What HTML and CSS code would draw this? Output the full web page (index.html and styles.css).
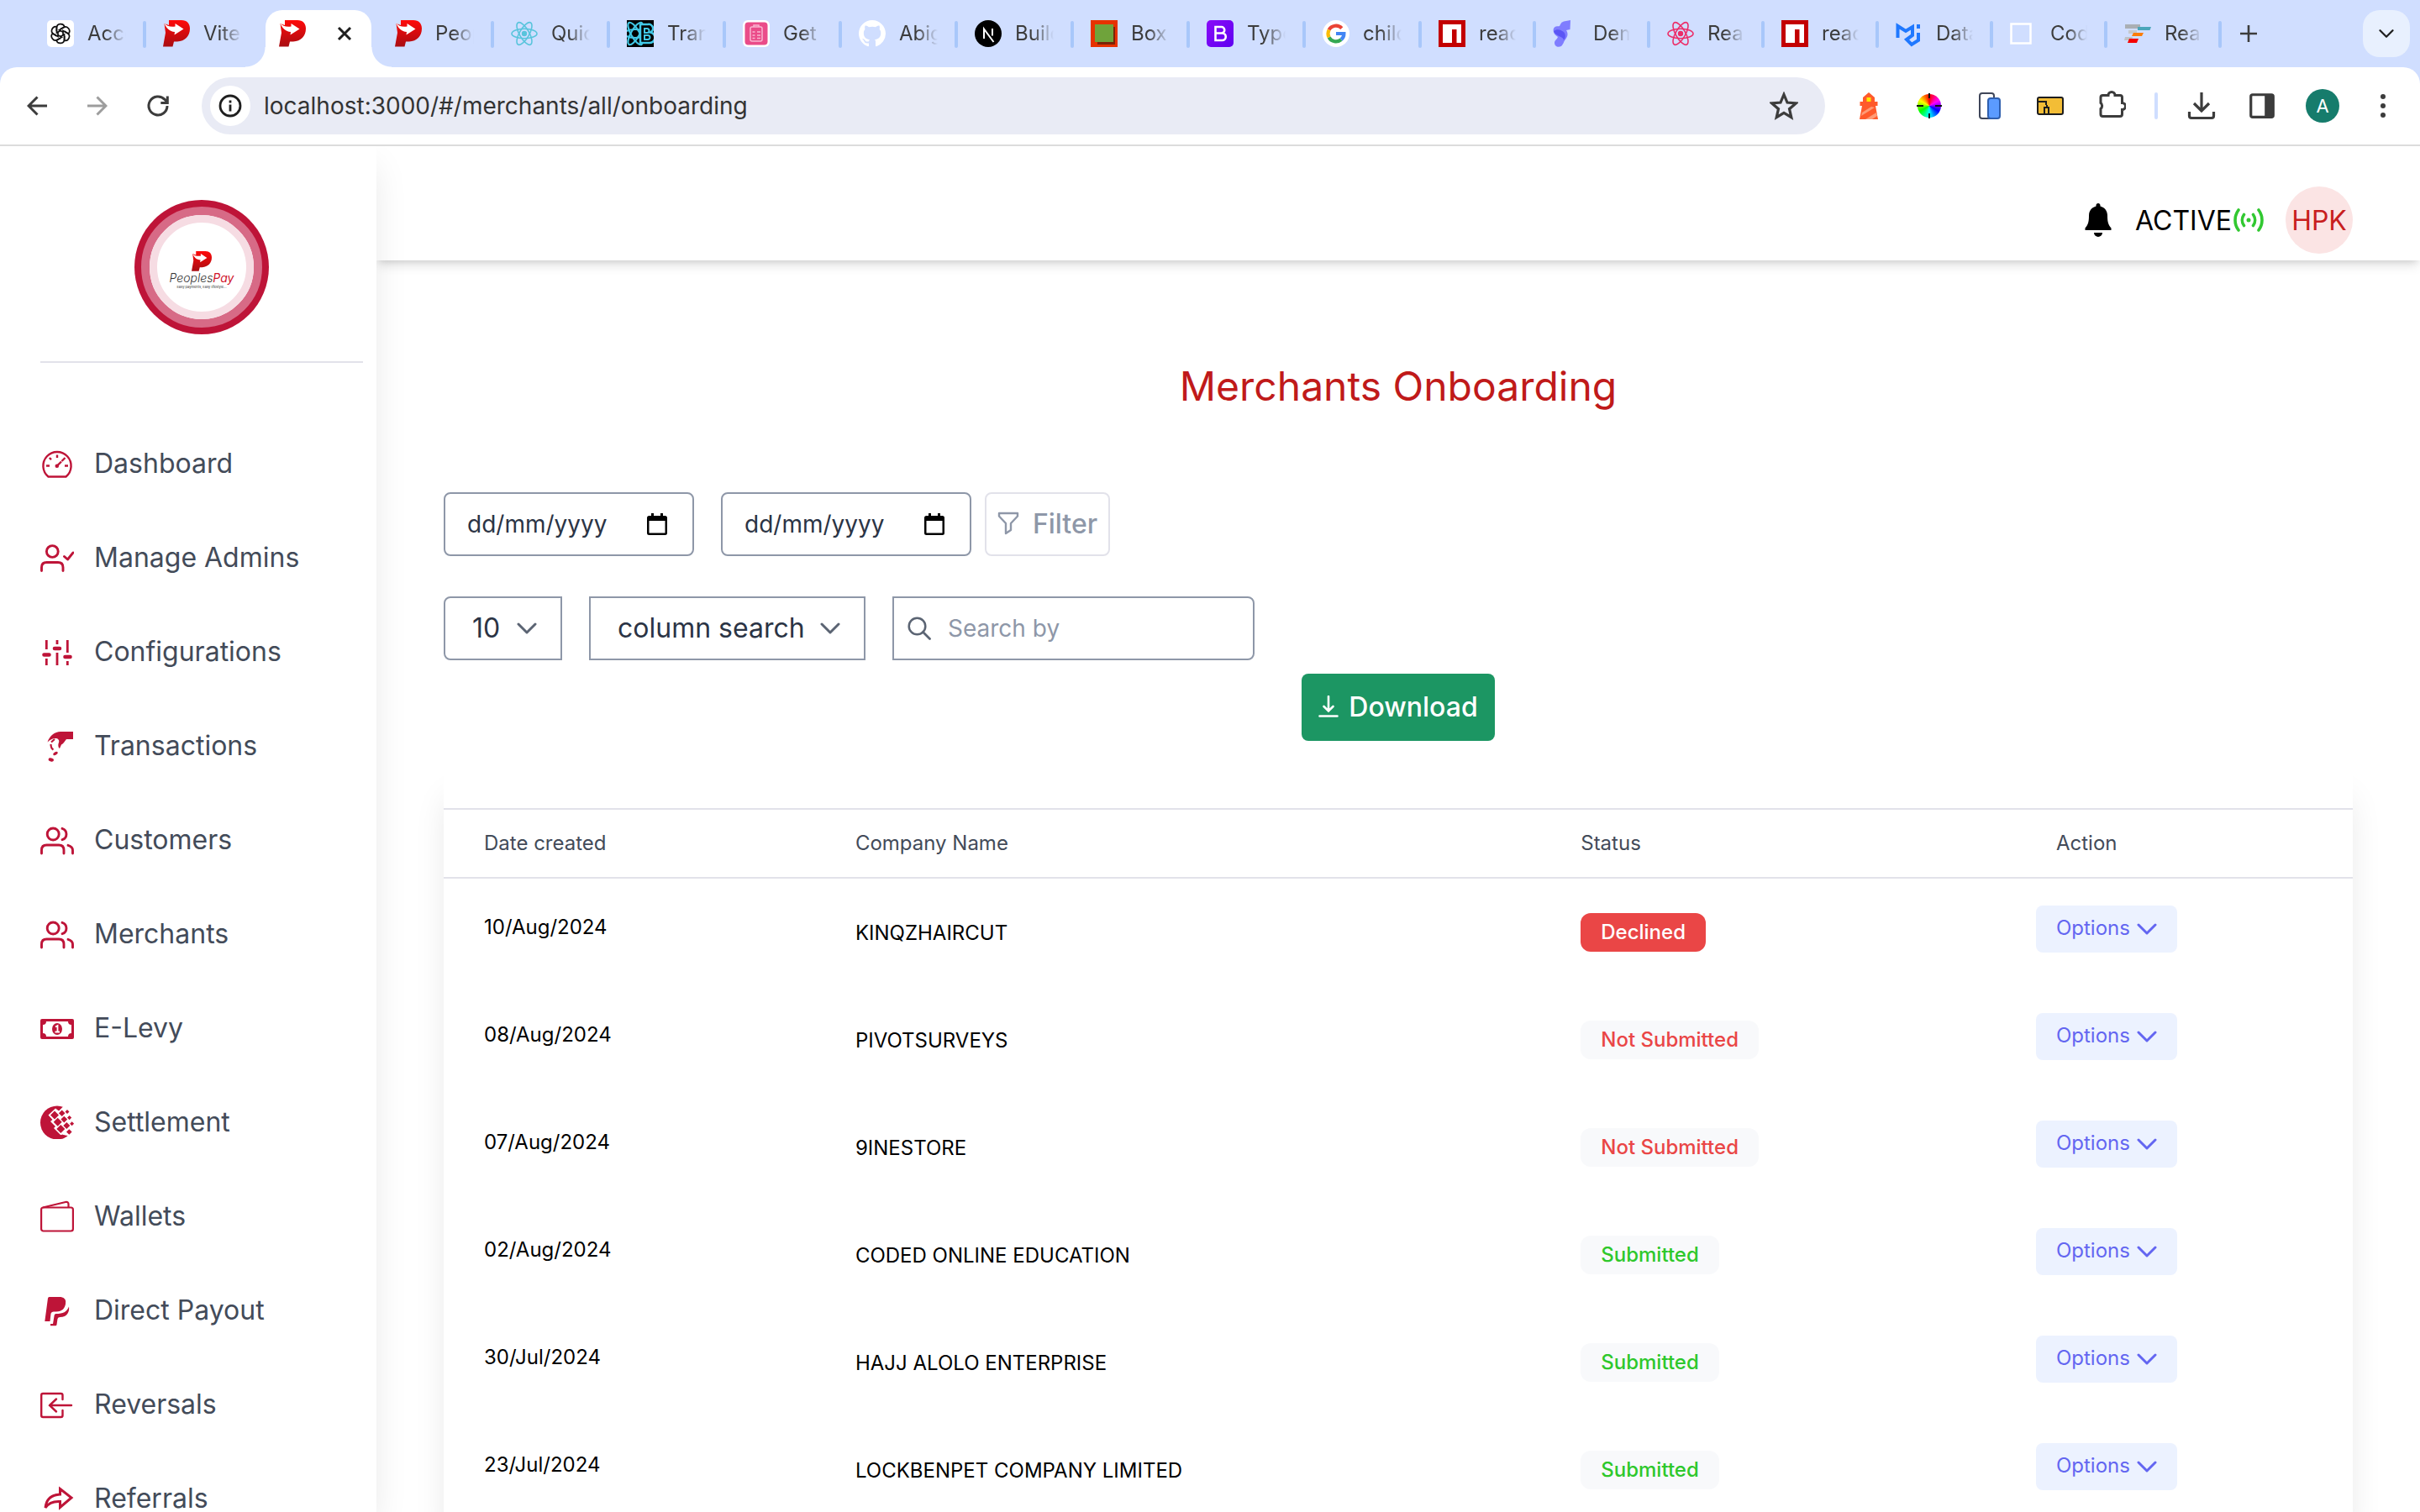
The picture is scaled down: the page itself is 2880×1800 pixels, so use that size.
FILE: index.html
```html
<!DOCTYPE html>
<html lang="en">
<head>
<meta charset="utf-8">
<title>Merchants Onboarding</title>
<link rel="stylesheet" href="styles.css">
</head>
<body>
<svg class="sprite" aria-hidden="true">
  <defs>
    <linearGradient id="g-red" x1="0" y1="0" x2="0" y2="1"><stop offset="0" stop-color="#ff0a0a"/><stop offset="1" stop-color="#a80d12"/></linearGradient>
    <linearGradient id="g-purple" x1="0" y1="0" x2="1" y2="1"><stop offset="0" stop-color="#8a0cf8"/><stop offset="1" stop-color="#5f00f0"/></linearGradient>
  </defs>
  <symbol id="i-pay" viewBox="0 0 32 32"><path d="M7 0h15c6.500 0 10 4 10 10 0 9-6 15-15 15.500h-4L11.500 31.500H0L3 15 1.500 4l5.500 2z" fill="url(#g-red)"/><path d="M1.500 3.500C4 7 9 8.500 14.500 7.500V4l10 6.500-11 7 .5-3.500C8 13.500 3.500 9.500 1.500 3.500z" fill="#fff"/></symbol>
  <symbol id="i-gpt" viewBox="0 0 32 32"><rect width="32" height="32" rx="5" fill="#fff"/><g fill="none" stroke="#111" stroke-width="1.700"><path id="petal" d="M16 12.500l-4.500 2.600v-6c0-5.500 8-6 9.300-1.200L16 10.500"/><use href="#petal" transform="rotate(60 16 16)"/><use href="#petal" transform="rotate(120 16 16)"/><use href="#petal" transform="rotate(180 16 16)"/><use href="#petal" transform="rotate(240 16 16)"/><use href="#petal" transform="rotate(300 16 16)"/></g></symbol>
  <symbol id="i-atom" viewBox="0 0 32 32"><g fill="none" stroke="currentColor" stroke-width="1.600"><ellipse cx="16" cy="16" rx="15" ry="5.700"/><ellipse cx="16" cy="16" rx="15" ry="5.700" transform="rotate(60 16 16)"/><ellipse cx="16" cy="16" rx="15" ry="5.700" transform="rotate(120 16 16)"/></g><circle cx="16" cy="16" r="3.200" fill="currentColor"/></symbol>
  <symbol id="i-atomb" viewBox="0 0 32 32"><rect width="32" height="32"/><g fill="none" stroke="#41c8e6" stroke-width="2.200"><ellipse cx="10" cy="16" rx="13" ry="5"/><ellipse cx="10" cy="16" rx="15" ry="5" transform="rotate(60 10 16)"/><ellipse cx="10" cy="16" rx="15" ry="5" transform="rotate(120 10 16)"/></g><path d="M16 5h9a5 5 0 0 1 3 9.500A6 6 0 0 1 26 27H16z" stroke="#41c8e6" stroke-width="2.500"/><path d="M21 10h3a2 2 0 0 1 0 5h-3zM21 18h4a2 2 0 0 1 0 5h-4z" stroke="#41c8e6" stroke-width="2"/></symbol>
  <symbol id="i-clip" viewBox="0 0 32 32"><rect width="32" height="32" rx="6" fill="#fff"/><rect x="2.500" y="2.500" width="27" height="27" rx="4" fill="#ea4c89"/><g fill="none" stroke="#f9b4cf" stroke-width="1.500"><rect x="9" y="8" width="14" height="17" rx="2"/><path d="M13 8V6h6v2M11.500 14h3M17 14h4M11.500 18h3M17 18h4M11.500 21.500h3M17 21.500h4"/></g></symbol>
  <symbol id="i-github" viewBox="0 0 16 16"><path fill="#fff" d="M8 0C3.580 0 0 3.580 0 8c0 3.540 2.290 6.530 5.470 7.590.4.070.55-.17.55-.38 0-.19-.01-.82-.01-1.490-2.010.37-2.530-.49-2.690-.94-.09-.23-.48-.94-.82-1.130-.28-.15-.68-.52-.01-.53.63-.01 1.080.58 1.230.82.72 1.210 1.870.87 2.330.66.07-.52.28-.87.51-1.070-1.780-.2-3.640-.89-3.640-3.950 0-.87.31-1.590.82-2.150-.08-.2-.36-1.020.08-2.120 0 0 .67-.21 2.200.82.64-.18 1.320-.27 2-.27s1.360.09 2 .27c1.530-1.040 2.200-.82 2.200-.82.44 1.100.16 1.920.08 2.120.51.56.82 1.270.82 2.150 0 3.070-1.870 3.750-3.650 3.950.29.25.54.73.54 1.480 0 1.070-.01 1.930-.01 2.200 0 .21.15.46.55.38A8.010 8.010 0 0 0 16 8c0-4.420-3.580-8-8-8z"/></symbol>
  <symbol id="i-next" viewBox="0 0 32 32"><circle cx="16" cy="16" r="16"/><path d="M11 22V10.500L22.500 26M21 10v8.500" fill="none" stroke="#fff" stroke-width="2"/></symbol>
  <symbol id="i-box" viewBox="0 0 32 32"><rect width="32" height="32" fill="#e63200"/><path d="M8 8h21v21H8z" fill="#7a2408"/><rect x="5" y="5" width="22" height="21" fill="#6fa33b"/></symbol>
  <symbol id="i-boot" viewBox="0 0 32 32"><rect width="32" height="32" rx="5" fill="url(#g-purple)"/><path d="M10.500 8h7a3.700 3.700 0 0 1 0 7.500h-7zM10.500 15.500h8a4.200 4.200 0 0 1 0 8.500h-8z" fill="none" stroke="#fff" stroke-width="2.600"/></symbol>
  <symbol id="i-google" viewBox="0 0 32 32"><circle cx="16" cy="16" r="16" fill="#fff"/><g fill="none" stroke-width="4.200"><path d="M22.800 9.600A9.500 9.500 0 0 0 7.600 11.600" stroke="#ea4335"/><path d="M7.600 11.600a9.500 9.500 0 0 0 0 8.800" stroke="#fbbc05"/><path d="M7.600 20.400a9.500 9.500 0 0 0 14.500 2.700" stroke="#34a853"/><path d="M22.100 23.100A9 9 0 0 0 25.400 16H16" stroke="#4285f4"/></g></symbol>
  <symbol id="i-npm" viewBox="0 0 32 32"><rect width="32" height="32" fill="#c30000"/><path d="M5 5h22v22h-5.500V11H16v16H5z" fill="#fff"/></symbol>
  <symbol id="i-ribbon" viewBox="0 0 32 32"><path d="M9 5q1-3 4-3.500L21 0l-.5 11-4.500 1c3 5 1 8-1 11-2 2-2 5-5 8-4 2-8 0-8-4 0-3 3-4 4-7-5-3-7-8-4-11.500 2-2 4-1 6-1.500z" fill="#7f7dff"/><path d="M1 13c4-3 8-2 12 1 3 4 2 7 0 10 0-5-11-5-12-11z" fill="#5a55f5"/></symbol>
  <symbol id="i-mui" viewBox="0 0 32 32"><path d="M2.500 21V7l9.500 6 8-5v10l-7 5 6 6 8-5V15M27 5v5" fill="none" stroke="#1f78ff" stroke-width="4"/></symbol>
  <symbol id="i-empty" viewBox="0 0 32 32"><rect x="1.500" y="4.500" width="23" height="23" fill="none" stroke="#fff" stroke-width="2.500"/></symbol>
  <symbol id="i-bars" viewBox="0 0 32 32"><path d="M1 5h18v5H1z" fill="#aaafb4"/><path d="M16 8h16l-1.500 4H16z" fill="#4ca6ba"/><path d="M5 12h10v4H5z" fill="#c6c9cd"/><path d="M11 15h12l-2 4H9z" fill="#fb7d07"/><path d="M1 20h9l-1 4H0z" fill="#bfc3c7"/><path d="M6 22h11l-2 5H4z" fill="#f50000"/></symbol>
  <symbol id="i-close" viewBox="0 0 20 20"><path d="M3 3l14 14M17 3L3 17" stroke="#1f1f1f" stroke-width="3"/></symbol>
  <symbol id="i-plus" viewBox="0 0 24 24"><path d="M12 2v20M2 12h20" stroke="#3c3c3c" stroke-width="2.600"/></symbol>
  <symbol id="i-chev" viewBox="0 0 24 24"><path d="M2 7l10 10L22 7" fill="none" stroke="currentColor" stroke-width="3" stroke-linecap="round" stroke-linejoin="round"/></symbol>
  <symbol id="i-back" viewBox="0 0 24 24"><path d="M24 12H2M12.500 1.500L2 12l10.500 10.500" fill="none" stroke="currentColor" stroke-width="3"/></symbol>
  <symbol id="i-reload" viewBox="0 0 28 28"><path d="M25 14a11 11 0 1 1-3-7.600L25 9.500M25.300 2.500v8h-8" fill="none" stroke="#3c3c3c" stroke-width="3"/></symbol>
  <symbol id="i-info" viewBox="0 0 28 28"><circle cx="14" cy="14" r="12" fill="none" stroke="#1f1f1f" stroke-width="2.800"/><path d="M14 12.500v8M14 7.500v3" stroke="#1f1f1f" stroke-width="2.800"/></symbol>
  <symbol id="i-star" viewBox="0 0 34 34"><path d="M17 3.500l4 9.500 10.300.9-7.800 6.800 2.300 10L17 25.400l-8.800 5.300 2.300-10-7.800-6.800 10.300-.9z" fill="none" stroke="#3c3c3c" stroke-width="3.200"/></symbol>
  <symbol id="i-light" viewBox="0 0 32 32"><path d="M9 6l7-6 7 6v5h3.500v5H24l3 16H5l3-16H5.500v-5H9z" fill="#ff5a2b"/><rect x="13.500" y="6" width="5" height="5" fill="#ffe600"/><path d="M8 24l11-7 4 1-16 10zM12 32l13-8 1 4-6 4z" fill="#ff9b76"/></symbol>
  <symbol id="i-dev" viewBox="0 0 32 32"><rect x="4" y="1" width="17" height="30" rx="3" fill="#fff" stroke="#3f4659" stroke-width="2"/><rect x="14" y="7" width="14" height="24" rx="3" fill="#5b9bff" stroke="#2f5fae" stroke-width="2"/></symbol>
  <symbol id="i-yel" viewBox="0 0 32 32"><rect x="1" y="6" width="30" height="20" rx="2" fill="#f3bd36" stroke="#1d1d1d" stroke-width="2"/><path d="M2 11h9v4M9 26V18h5v8M12 18v-3" fill="none" stroke="#1d1d1d" stroke-width="2"/></symbol>
  <symbol id="i-puz" viewBox="0 0 36 36"><path d="M6 8q0-2.500 2.500-2.500H15a4 4 0 0 1 8 0h6q2.500 0 2.500 2.500v6.500a4 4 0 0 1 0 8V28q0 2.500-2.500 2.500H8.500Q6 30.500 6 28v-6.500a4.500 4.500 0 0 0 0-7z" fill="none" stroke="#3c3c3c" stroke-width="3"/></symbol>
  <symbol id="i-down" viewBox="0 0 34 34"><path d="M17 1v21M8 14l9 9 9-9M2.500 24v5q0 2.500 2.500 2.500h24q2.500 0 2.500-2.500v-5" fill="none" stroke="#3c3c3c" stroke-width="3.200"/></symbol>
  <symbol id="i-panel" viewBox="0 0 32 32"><rect x="3.500" y="3.500" width="25" height="25" rx="2" fill="none" stroke="#3c3c3c" stroke-width="3"/><path d="M19 3h10v26H19z" fill="#3c3c3c"/></symbol>
  <symbol id="i-dots" viewBox="0 0 32 32"><g fill="#3c3c3c"><circle cx="16" cy="5" r="3"/><circle cx="16" cy="16" r="3"/><circle cx="16" cy="27" r="3"/></g></symbol>
  <symbol id="i-bell" viewBox="0 0 32 40"><path d="M16 0c1.500 0 2.500 1 2.500 2.500v1C24 5 27 9 27 15c0 8 1.500 11 4.500 14.500V32H.5v-2.500C3.500 26 5 23 5 15 5 9 8 5 13.500 3.500v-1C13.500 1 14.500 0 16 0zM11 35h10a5 5 0 0 1-10 0z"/></symbol>
  <symbol id="i-signal" viewBox="0 0 36 28"><g fill="none" stroke="#31c831" stroke-width="3.600" stroke-linecap="round"><path d="M6 2a20 20 0 0 0 0 24M30 2a20 20 0 0 1 0 24M12.500 7.500a11 11 0 0 0 0 13M23.500 7.500a11 11 0 0 1 0 13"/></g><circle cx="18" cy="14" r="2.500" fill="#31c831"/></symbol>
  <symbol id="n-dash" viewBox="0 0 40 40"><path d="M9.500 35.500A16.600 16.600 0 1 1 30.500 35.500z" fill="none" stroke="currentColor" stroke-width="2.400" stroke-linejoin="round"/><path d="M20 9.500v3.500M10.800 13l2.200 2.200M7 22.500h4M29 22.500h4M25.500 17l4-4M20 22.500l5-5" stroke="currentColor" stroke-width="2.400"/><circle cx="19.800" cy="22.700" r="2.300" fill="currentColor"/></symbol>
  <symbol id="n-admin" viewBox="0 0 40 40"><g fill="none" stroke="currentColor" stroke-width="2.900" stroke-linecap="round" stroke-linejoin="round"><circle cx="14.300" cy="12.500" r="6.900"/><path d="M1.500 35.500v-4q0-6 6-6h13.500q6 0 6 6v4M28.500 18.500l4 3.500 6.500-8"/></g></symbol>
  <symbol id="n-config" viewBox="0 0 40 40"><path d="M7.300 6v11M7.300 28v8M20 6v5M20 21v15M32.300 6v15M32.300 31v5" stroke="currentColor" stroke-width="2.800"/><path d="M4.500 23.500h6M17 16h6M29.500 26h6" stroke="currentColor" stroke-width="4.600" stroke-linecap="round"/></symbol>
  <symbol id="n-trans" viewBox="0 0 40 40"><path d="M8.500 15.500C11 8 17 3 24 3h15v9h-8c-2 2-3 5-6 6.500l-2 4.500c-2-1-2-5-1-7 1-3-1-5-4-5-4 0-6 1.500-9.500 4.500z" fill="currentColor"/><path d="M13 15.500l4-3.500M12.500 18c0 3 .5 5 3 6.500" fill="none" stroke="currentColor" stroke-width="2.200"/><ellipse cx="18" cy="29" rx="3" ry="1.800" transform="rotate(-28 18 29)" fill="currentColor"/><ellipse cx="12.800" cy="36.500" rx="3.200" ry="2" transform="rotate(12 12.800 36.500)" fill="currentColor"/></symbol>
  <symbol id="n-users" viewBox="0 0 40 40"><g fill="none" stroke="currentColor" stroke-width="2.900" stroke-linecap="round"><circle cx="15.200" cy="13" r="7"/><path d="M1.500 36v-4q0-6 6-6h14.500q6 0 6 6v4M26 6.300a7 7 0 0 1 0 13.400M33 26.300q5.500 1.500 5.500 6V36"/></g></symbol>
  <symbol id="n-levy" viewBox="0 0 40 40"><path fill-rule="evenodd" d="M2 9h36q2 0 2 2v20q0 2-2 2H2q-2 0-2-2V11q0-2 2-2zM7 12a4 4 0 0 1-4 4v10a4 4 0 0 1 4 4h26a4 4 0 0 1 4-4V16a4 4 0 0 1-4-4z" fill="currentColor"/><ellipse cx="20" cy="21" rx="6" ry="7" fill="currentColor"/><path d="M18 18.500l2.500-1.500v7M17.500 24.500h5.500" fill="none" stroke="#fff" stroke-width="1.800"/></symbol>
  <symbol id="n-settle" viewBox="0 0 40 40"><circle cx="20" cy="20.500" r="20" fill="currentColor"/><path d="M9.500 11.500L18 3.500l4 3 5-5L33 0h8v42h-9l1-6-9-1-8-8 2-2-6-6 2.500-2z" fill="#fff"/><path d="M17 6.500l5 5-5 5-5-5zM25.700 5.500l3.800 3.800-3.800 3.800-3.800-3.800zM32 5l2.500 2.500L32 10l-2.500-2.500zM20.700 14.700l5 5-5 5-5-5zM28.300 12.700l3.900 3.900-3.900 3.900-3.900-3.900zM34.600 12l2.600 2.600-2.600 2.600-2.600-2.600zM24.300 23l5 5-5 5-5-5zM31.300 20l4 4-4 4-4-4zM37.600 19.200l2.500 2.500-2.500 2.500-2.500-2.500zM34.300 28.200l3.300 3.300-3.300 3.300-3.300-3.300z" fill="currentColor"/><path d="M19 39.500l7-5 6 2-5 3z" fill="currentColor"/></symbol>
  <symbol id="n-wallet" viewBox="0 0 40 40"><g fill="none" stroke="currentColor" stroke-width="2.200" stroke-linejoin="round"><rect x="1.100" y="9.500" width="37.800" height="28" rx="2.500"/><path d="M3 9.500L30 3q3.500-.5 3.500 2.500v4"/></g></symbol>
  <symbol id="n-paypal" viewBox="0 0 40 40"><path d="M10.500 4h14q7 1 5.500 8.500C28.500 20 24 21.500 16 21.500q-3 0-3.500 2.500L11.500 33H5.300L9 5.500Q9.300 4 10.500 4z" fill="currentColor"/><path d="M34 15.500c1 6-2 12.500-10.500 12.500q-2.500 0-3 2l-1 7q-.2 1.300-1.500 1.300H12V36h3l1.700-10.500q.3-1.500 2-1.500C27 24 31.500 22 34 15.500z" fill="currentColor"/></symbol>
  <symbol id="n-rev" viewBox="0 0 40 40"><path d="M26.500 14V9q0-2-2-2H3Q1.200 7 1.200 9v24q0 2 2 2h21.300q2 0 2-2v-6M37 21H11M19 13.500L11 21l8 7.500" fill="none" stroke="currentColor" stroke-width="2.400" stroke-linecap="round"/></symbol>
  <symbol id="n-ref" viewBox="0 0 40 40"><path d="M23.500 8.500L37 19 23.500 30.500v-7C15 23 9.500 25.500 6 31 7 21 13 15.500 23.500 15z" fill="none" stroke="currentColor" stroke-width="3"/></symbol>
  <symbol id="i-cal" viewBox="0 0 24 26"><path d="M5 0h3v3h8V0h3v3h2.500Q24 3 24 5.500v18q0 2.500-2.500 2.500h-19Q0 26 0 23.500v-18Q0 3 2.500 3H5zM2.500 9v14.500h19V9z" fill-rule="evenodd"/></symbol>
  <symbol id="i-funnel" viewBox="0 0 26 28"><path d="M2 2h22v3.500l-8 8.500v8l-6 4V14L2 5.500z" fill="none" stroke="currentColor" stroke-width="2.400" stroke-linejoin="round"/></symbol>
  <symbol id="i-search" viewBox="0 0 28 28"><circle cx="11.500" cy="11.500" r="9.800" fill="none" stroke="currentColor" stroke-width="2.500"/><path d="M18.500 18.500l8 8" stroke="currentColor" stroke-width="2.800" stroke-linecap="round"/></symbol>
  <symbol id="i-save" viewBox="0 0 24 26"><path d="M12 1v17M6.500 13l5.500 5.500 5.500-5.500M1.500 24.500h21" fill="none" stroke="#fff" stroke-width="2.600" stroke-linecap="round"/></symbol>
  <symbol id="i-cross" viewBox="0 0 32 32"><path d="M16 1v6M16 25v6M1 16h8M23 16h8" stroke="#111" stroke-width="2"/></symbol>
</svg>

<div class="browser">
  <div class="tabstrip">
    <div class="tabs">
      <a class="tab" href="#"><svg><use href="#i-gpt"/></svg><span>Acco</span></a>
      <a class="tab no-sep" href="#"><svg><use href="#i-pay"/></svg><span>Vite</span></a>
      <div class="tab active"><svg><use href="#i-pay"/></svg><button class="tab-close" aria-label="Close tab"><svg><use href="#i-close"/></svg></button></div>
      <a class="tab" href="#"><svg><use href="#i-pay"/></svg><span>Peop</span></a>
      <a class="tab" href="#"><svg class="cyan"><use href="#i-atom"/></svg><span>Quick</span></a>
      <a class="tab" href="#"><svg><use href="#i-atomb"/></svg><span>Trans</span></a>
      <a class="tab" href="#"><svg><use href="#i-clip"/></svg><span>Get</span></a>
      <a class="tab" href="#"><svg><use href="#i-github"/></svg><span>Abig</span></a>
      <a class="tab" href="#"><svg><use href="#i-next"/></svg><span>Build</span></a>
      <a class="tab" href="#"><svg><use href="#i-box"/></svg><span>Box</span></a>
      <a class="tab" href="#"><svg><use href="#i-boot"/></svg><span>Typo</span></a>
      <a class="tab" href="#"><svg><use href="#i-google"/></svg><span>child</span></a>
      <a class="tab narrow" href="#"><svg><use href="#i-npm"/></svg><span>react</span></a>
      <a class="tab narrow" href="#"><svg><use href="#i-ribbon"/></svg><span>Dem</span></a>
      <a class="tab narrow" href="#"><svg class="pink"><use href="#i-atom"/></svg><span>Reac</span></a>
      <a class="tab narrow" href="#"><svg><use href="#i-npm"/></svg><span>react</span></a>
      <a class="tab narrow" href="#"><svg><use href="#i-mui"/></svg><span>Data</span></a>
      <a class="tab narrow" href="#"><svg><use href="#i-empty"/></svg><span>Code</span></a>
      <a class="tab narrow" href="#"><svg><use href="#i-bars"/></svg><span>Reac</span></a>
      <button class="new-tab" aria-label="New tab"><svg><use href="#i-plus"/></svg></button>
    </div>
    <button class="tab-search" aria-label="Search tabs"><svg><use href="#i-chev"/></svg></button>
  </div>
  <div class="toolbar">
    <button class="tool" aria-label="Back"><svg class="s24"><use href="#i-back"/></svg></button>
    <button class="tool forward" aria-label="Forward"><svg class="s24"><use href="#i-back"/></svg></button>
    <button class="tool" aria-label="Reload"><svg class="s28"><use href="#i-reload"/></svg></button>
    <div class="omnibox">
      <button class="site-info" aria-label="Site information"><svg class="s28"><use href="#i-info"/></svg></button>
      <input class="url" type="text" aria-label="Address" value="localhost:3000/#/merchants/all/onboarding">
      <button class="star" aria-label="Bookmark"><svg class="s34"><use href="#i-star"/></svg></button>
    </div>
    <button class="tool" aria-label="Lighthouse"><svg class="s32"><use href="#i-light"/></svg></button>
    <button class="tool" aria-label="Colour picker"><span class="wheel"><svg class="s32"><use href="#i-cross"/></svg></span></button>
    <button class="tool" aria-label="Device preview"><svg class="s32"><use href="#i-dev"/></svg></button>
    <button class="tool" aria-label="Viewport resizer"><svg class="s32"><use href="#i-yel"/></svg></button>
    <button class="tool" aria-label="Extensions"><svg class="s36"><use href="#i-puz"/></svg></button>
    <span class="tool-sep"></span>
    <button class="tool" aria-label="Downloads"><svg class="s34"><use href="#i-down"/></svg></button>
    <button class="tool" aria-label="Side panel"><svg class="s34"><use href="#i-panel"/></svg></button>
    <button class="tool" aria-label="Profile"><span class="profile">A</span></button>
    <button class="tool" aria-label="Menu"><svg class="s32"><use href="#i-dots"/></svg></button>
  </div>
</div>

<div class="app">
  <aside class="sidebar">
    <div class="brand">
      <div class="ring"><div class="ring-mid"><div class="ring-in">
        <svg class="brand-mark"><use href="#i-pay"/></svg>
        <span class="brand-name">Peoples<b>Pay</b></span>
        <span class="brand-tag">Easy payments, Easy lifestyle...</span>
      </div></div></div>
    </div>
    <nav class="nav">
      <a href="#"><svg><use href="#n-dash"/></svg>Dashboard</a>
      <a href="#"><svg><use href="#n-admin"/></svg>Manage Admins</a>
      <a href="#"><svg><use href="#n-config"/></svg>Configurations</a>
      <a href="#"><svg><use href="#n-trans"/></svg>Transactions</a>
      <a href="#"><svg><use href="#n-users"/></svg>Customers</a>
      <a href="#"><svg><use href="#n-users"/></svg>Merchants</a>
      <a href="#"><svg><use href="#n-levy"/></svg>E-Levy</a>
      <a href="#"><svg><use href="#n-settle"/></svg>Settlement</a>
      <a href="#"><svg><use href="#n-wallet"/></svg>Wallets</a>
      <a href="#"><svg><use href="#n-paypal"/></svg>Direct Payout</a>
      <a href="#"><svg><use href="#n-rev"/></svg>Reversals</a>
      <a href="#"><svg><use href="#n-ref"/></svg>Referrals</a>
    </nav>
  </aside>
  <div class="page">
    <header class="topbar">
      <button class="bell" aria-label="Notifications"><svg><use href="#i-bell"/></svg></button>
      <span class="state">ACTIVE<svg><use href="#i-signal"/></svg></span>
      <button class="avatar">HPK</button>
    </header>
    <main class="main">
      <h1>Merchants Onboarding</h1>
      <form class="filters">
        <div class="filter-row">
          <label class="field date"><input type="text" placeholder="dd/mm/yyyy" aria-label="Start date"><svg><use href="#i-cal"/></svg></label>
          <div class="pair">
            <label class="field date"><input type="text" placeholder="dd/mm/yyyy" aria-label="End date"><svg><use href="#i-cal"/></svg></label>
            <button type="button" class="filter" disabled><svg><use href="#i-funnel"/></svg>Filter</button>
          </div>
        </div>
        <div class="filter-row">
          <label class="pick size"><select aria-label="Rows per page"><option>10</option><option>20</option></select><svg><use href="#i-chev"/></svg></label>
          <label class="pick column"><select aria-label="Column"><option>column search</option></select><svg><use href="#i-chev"/></svg></label>
          <label class="field search"><svg><use href="#i-search"/></svg><input type="text" placeholder="Search by" aria-label="Search by"></label>
        </div>
        <button type="button" class="download"><svg><use href="#i-save"/></svg>Download</button>
      </form>
      <section class="card">
        <table>
          <colgroup><col class="c-date"><col class="c-name"><col class="c-status"><col class="c-action"></colgroup>
          <thead><tr><th>Date created</th><th>Company Name</th><th>Status</th><th>Action</th></tr></thead>
          <tbody>
            <tr><td class="day">10/Aug/2024</td><td>KINQZHAIRCUT</td><td><span class="badge declined">Declined</span></td><td class="act"><button class="options">Options<svg><use href="#i-chev"/></svg></button></td></tr>
            <tr><td class="day">08/Aug/2024</td><td>PIVOTSURVEYS</td><td><span class="badge missing">Not Submitted</span></td><td class="act"><button class="options">Options<svg><use href="#i-chev"/></svg></button></td></tr>
            <tr><td class="day">07/Aug/2024</td><td>9INESTORE</td><td><span class="badge missing">Not Submitted</span></td><td class="act"><button class="options">Options<svg><use href="#i-chev"/></svg></button></td></tr>
            <tr><td class="day">02/Aug/2024</td><td>CODED ONLINE EDUCATION</td><td><span class="badge done">Submitted</span></td><td class="act"><button class="options">Options<svg><use href="#i-chev"/></svg></button></td></tr>
            <tr><td class="day">30/Jul/2024</td><td>HAJJ ALOLO ENTERPRISE</td><td><span class="badge done">Submitted</span></td><td class="act"><button class="options">Options<svg><use href="#i-chev"/></svg></button></td></tr>
            <tr><td class="day">23/Jul/2024</td><td>LOCKBENPET COMPANY LIMITED</td><td><span class="badge done">Submitted</span></td><td class="act"><button class="options">Options<svg><use href="#i-chev"/></svg></button></td></tr>
          </tbody>
        </table>
      </section>
    </main>
  </div>
</div>
</body>
</html>
```
FILE: styles.css
```css
* { box-sizing: border-box; margin: 0; }
body {
  height: 100vh;
  display: flex;
  flex-direction: column;
  overflow: hidden;
  background: #fff;
  color: #000;
  font-family: Inter, "Liberation Sans", sans-serif;
  font-size: 24px;
}
button, input, select { font: inherit; color: inherit; border: 0; padding: 0; background: none; }
a { color: inherit; text-decoration: none; }
svg { display: block; flex: none; }
.sprite { position: absolute; width: 0; height: 0; }
.s24 { width: 24px; height: 24px; }
.s28 { width: 28px; height: 28px; }
.s32 { width: 32px; height: 32px; }
.s34 { width: 34px; height: 34px; }
.s36 { width: 36px; height: 36px; }

/* Browser frame */
.browser { flex: none; background: #d0deff; }
.tabstrip { height: 80px; display: flex; align-items: flex-start; justify-content: space-between; padding: 12px 12px 0 34px; }
.tabs { display: flex; min-width: 0; }
.tab {
  position: relative;
  flex: none;
  width: 138px;
  height: 56px;
  display: flex;
  align-items: center;
  gap: 16px;
  padding: 0 22px;
  color: #3c3c3c;
  line-height: 32px;
}
.tab.narrow { width: 136px; }
.tab > svg { width: 32px; height: 32px; }
.tab > .cyan { color: #58c4dc; }
.tab > .pink { color: #ec2d68; }
.tab > span {
  width: 46px;
  overflow: hidden;
  white-space: nowrap;
  -webkit-mask-image: linear-gradient(90deg, #000 45%, transparent);
  mask-image: linear-gradient(90deg, #000 45%, transparent);
}
.tab::after { content: ""; position: absolute; right: -2px; top: 13px; width: 4px; height: 32px; border-radius: 2px; background: #a8c7fa; }
.tab.no-sep::after { display: none; }
.tab.active { z-index: 1; }
.tab.active::before {
  content: "";
  position: absolute;
  z-index: -1;
  inset: 0 6px -12px;
  border-radius: 20px 20px 0 0;
  background: #fff;
}
.tab.active::after {
  z-index: -1;
  left: -18px;
  right: -18px;
  top: 44px;
  width: auto;
  height: 24px;
  border-radius: 0;
  background:
    radial-gradient(circle at 0 0, transparent 23px, #fff 24px) left / 24px 24px no-repeat,
    radial-gradient(circle at 100% 0, transparent 23px, #fff 24px) right / 24px 24px no-repeat;
}
.tab-close { display: grid; place-items: center; width: 32px; height: 32px; margin-left: 14px; }
.tab-close svg { width: 20px; height: 20px; }
.new-tab { width: 68px; height: 56px; display: grid; place-items: center; }
.new-tab svg { width: 24px; height: 24px; }
.tab-search { width: 56px; height: 56px; display: grid; place-items: center; border-radius: 20px; background: #e8f0fe; color: #1f1f1f; }
.tab-search svg { width: 18px; height: 18px; }
.toolbar { height: 94px; display: flex; align-items: center; padding: 0 8px; background: #fff; border-bottom: 2px solid #dcdcdc; border-radius: 20px 20px 0 0; }
.tool { flex: none; width: 72px; height: 68px; display: grid; place-items: center; color: #3c3c3c; }
.forward { color: #9d9d9d; transform: scaleX(-1); }
.omnibox { flex: 1; display: flex; align-items: center; height: 68px; margin: 0 16px; padding: 0 32px 0 10px; border-radius: 34px; background: #e9ebf5; }
.site-info { width: 48px; height: 48px; display: grid; place-items: center; border-radius: 50%; background: #fff; }
.url { flex: 1; min-width: 0; padding-left: 16px; font-size: 28px; color: #333; }
.wheel { width: 28px; height: 28px; display: grid; place-content: center; border-radius: 50%; background: conic-gradient(#f00, #f0f, #00f, #0ff, #0f0, #ff0, #f00); }
.tool-sep { width: 4px; height: 32px; margin: 0 16px; border-radius: 2px; background: #cfdeff; }
.profile { width: 40px; height: 40px; display: grid; place-items: center; border-radius: 50%; background: #167c6c; color: #fff; font-size: 22px; }

/* App shell */
.app { flex: 1; min-height: 0; display: flex; overflow: hidden; }
.sidebar { position: relative; z-index: 2; flex: none; width: 448px; background: #fff; box-shadow: 0 20px 40px -4px rgba(0, 0, 0, .1); }
.brand { margin: 0 16px 0 48px; padding: 64px 0 32px; display: flex; justify-content: center; border-bottom: 2px solid #e2e2ea; }
.ring { width: 160px; height: 160px; padding: 8px; border-radius: 50%; background: #be1438; }
.ring-mid { height: 144px; border-radius: 50%; border: 10px solid #d76a86; background: #fff; }
.ring-in { height: 124px; border: 9px solid #f6dce3; border-radius: 50%; display: flex; flex-direction: column; align-items: center; padding-top: 34px; white-space: nowrap; }
.brand-mark { width: 24px; height: 24px; }
.brand-name { font-size: 14px; line-height: 16px; font-style: italic; font-weight: 300; color: #333; }
.brand-name b { font-weight: 400; color: #d0142c; }
.brand-tag { font-size: 4px; line-height: 6px; color: #333; }
.nav { display: flex; flex-direction: column; gap: 64px; padding: 96px 16px 0 48px; color: #434b59; font-size: 32px; line-height: 48px; }
.nav a { display: flex; align-items: center; gap: 24px; }
.nav svg { width: 40px; height: 40px; color: #be1438; }
.page { flex: 1; min-width: 0; }
.topbar { position: relative; height: 136px; display: flex; align-items: center; justify-content: flex-end; padding: 40px 80px 0; background: #fff; box-shadow: 0 8px 12px -2px rgba(0, 0, 0, .12), 0 4px 8px -4px rgba(0, 0, 0, .12); font-size: 32px; }
.topbar { padding-bottom: 0; }
.bell svg { width: 32px; height: 40px; }
.state { display: flex; align-items: center; margin: 0 24px 0 28px; }
.state svg { width: 40px; height: 28px; }
.avatar { width: 80px; height: 80px; border-radius: 50%; background: #fbe4e4; color: #c81e1e; }

/* Content */
.main { padding: 120px 80px 0; }
h1 { margin-bottom: 96px; text-align: center; color: #c01a1a; font-size: 48px; line-height: 60px; font-weight: 400; }
.filters { display: flex; flex-direction: column; align-items: flex-start; gap: 48px; }
.filter-row { display: flex; gap: 32px; }
.pair { display: flex; gap: 16px; }
.field, .pick, .filter { height: 76px; border: 2px solid #8e97a8; border-radius: 8px; background: #fff; }
.field { display: flex; align-items: center; }
.field input { flex: 1; min-width: 0; height: 68px; font-size: 28px; color: #2b3445; }
.field input::placeholder { color: #8e97a8; opacity: 1; }
.date { width: 298px; padding: 0 30px 0 26px; }
.field.date input::placeholder { color: #2b3445; }
.date svg { width: 24px; height: 26px; }
.filter { width: 149px; padding-bottom: 2px; display: flex; align-items: center; justify-content: center; gap: 16px; border-color: #e2e2ea; color: #8e97a8; font-size: 32px; font-weight: 500; }
.filter svg { width: 26px; height: 28px; }
.pick { display: grid; align-items: center; color: #2b3445; font-size: 32px; }
.pick select, .pick svg { grid-area: 1 / 1; }
.pick select { height: 72px; padding: 0 32px 2px; appearance: none; }
.pick svg { justify-self: end; width: 24px; height: 24px; margin-right: 28px; color: #5b6473; pointer-events: none; }
.size { width: 141px; border-radius: 8px 0 0 8px; }
.column { width: 329px; border-radius: 0; }
.search { width: 431px; gap: 20px; padding: 0 16px; border-radius: 0 8px 8px 0; }
.search svg { width: 28px; height: 28px; color: #5b6473; }
.download { align-self: center; width: 230px; height: 80px; margin-top: -32px; padding-bottom: 2px; display: flex; align-items: center; justify-content: center; gap: 12px; border-radius: 8px; background: #1c9663; color: #fff; font-size: 32px; font-weight: 500; }
.download svg { width: 24px; height: 26px; }
.card { margin-top: 32px; padding-top: 48px; background: #fff; box-shadow: 0 30px 40px -8px rgba(0, 0, 0, .12); }
table { width: 100%; table-layout: fixed; border-collapse: separate; border-spacing: 0; }
.c-date { width: 19.450%; }
.c-name { width: 38%; }
.c-status { width: 24.900%; }
th { height: 84px; padding: 0 0 2px 48px; border: solid #e2e2ea; border-width: 2px 0; text-align: left; font-weight: 400; color: #434b59; }
td { height: 128px; padding: 0 0 0 48px; }
td.day { padding-bottom: 14px; }
td.act { padding-left: 24px; padding-bottom: 8px; }
.badge { display: inline-block; padding: 0 24px; border-radius: 12px; line-height: 46px; vertical-align: middle; background: #f8f9fb; font-weight: 500; }
.declined { background: #ea4646; color: #fff; }
.missing { color: #ea4646; }
.done { color: #2ec82b; }
.options { height: 56px; display: flex; align-items: center; gap: 8px; padding: 0 24px 4px; border-radius: 8px; background: #ecf2ff; color: #6366f1; }
.options svg { width: 24px; height: 24px; margin-top: 4px; }
```
